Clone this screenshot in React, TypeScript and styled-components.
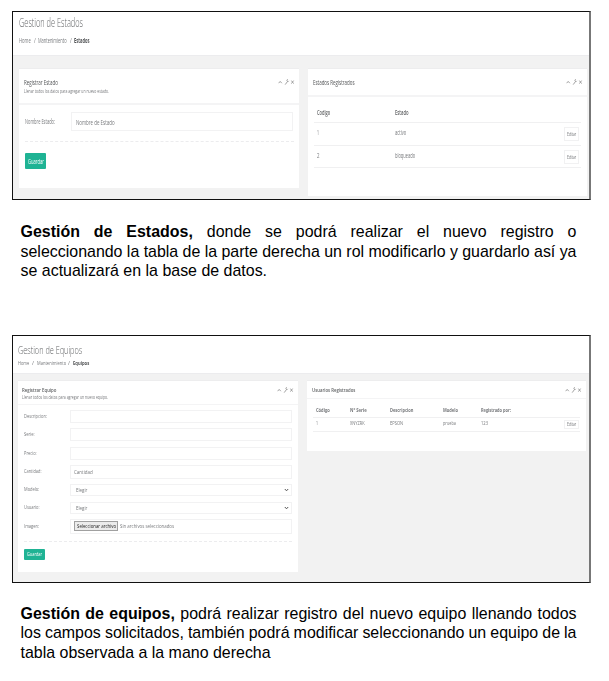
import React, { useLayoutEffect, useRef, useState } from "react";
import styled, { createGlobalStyle } from "styled-components";

const GlobalStyle = createGlobalStyle`
  *, *::before, *::after { box-sizing: border-box; }
  body { margin: 0; background: #fff; }
`;

/* ---------- text condensed to a given width ---------- */

type TextProps = {
  $w: number;
  $size: number;
  $line?: number;
  $weight?: number;
  $color?: string;
};

const TextBox = styled.span<TextProps>`
  display: block;
  flex: none;
  width: ${(p) => p.$w}px;
  height: ${(p) => p.$line ?? 8}px;
  line-height: ${(p) => p.$line ?? 8}px;
  font-family: "Open Sans", "Noto Sans", sans-serif;
  font-size: ${(p) => p.$size}px;
  font-weight: ${(p) => p.$weight ?? 400};
  color: ${(p) => p.$color ?? "#77797c"};
  white-space: nowrap;
`;

const TextInner = styled.span`
  display: inline-block;
  transform-origin: 0 50%;
`;

function Text({ children, ...rest }: TextProps & { children: string }) {
  const ref = useRef<HTMLSpanElement>(null);
  const [scale, setScale] = useState(1);
  useLayoutEffect(() => {
    if (ref.current) setScale(rest.$w / ref.current.offsetWidth);
  }, [rest.$w, children]);
  return (
    <TextBox {...rest}>
      <TextInner ref={ref} style={{ transform: `scaleX(${scale})` }}>
        {children}
      </TextInner>
    </TextBox>
  );
}

/* ---------- page ---------- */

const Page = styled.main`
  width: 609px;
  height: 681px;
  padding: 11px 0 0 12px;
  overflow: hidden;
  background: #fff;
`;

const Frame = styled.section<{ $h: number }>`
  width: 579px;
  height: ${(p) => p.$h}px;
  border: 1px solid #111;
  border-right: 2px solid #777;
  background: #f2f2f2;
  overflow: hidden;
`;

const Heading = styled.header<{ $h: number; $pad: string; $gap: number }>`
  display: flex;
  flex-direction: column;
  gap: ${(p) => p.$gap}px;
  height: ${(p) => p.$h}px;
  padding: ${(p) => p.$pad};
  background: #fff;
  border-bottom: 1px solid #ececee;
  > * { filter: blur(0.3px); }
`;

const Crumbs = styled.nav<{ $gap: number }>`
  display: flex;
  gap: ${(p) => p.$gap}px;
`;

const Columns = styled.div<{ $pad: string }>`
  display: grid;
  grid-template-columns: 280px 279px;
  column-gap: 9px;
  align-items: start;
  padding: ${(p) => p.$pad};
`;

const Card = styled.article<{ $h: number }>`
  height: ${(p) => p.$h}px;
  background: #fff;
  border-top: 1px solid #ededee;
  > * { filter: blur(0.3px); }
`;

const CardHead = styled.div<{ $h: number; $pad: string; $line?: number }>`
  display: flex;
  justify-content: space-between;
  height: ${(p) => p.$h}px;
  padding: ${(p) => p.$pad};
  border-bottom: ${(p) => p.$line ?? 1}px solid #f4f4f5;
`;

const Tools = styled.span`
  display: flex;
  align-items: center;
  height: 8px;
  color: #969696;
`;

const Form = styled.form<{ $pad: string }>`
  display: flex;
  flex-direction: column;
  padding: ${(p) => p.$pad};
`;

const Field = styled.div<{ $h: number; $mb: number; $label: number }>`
  display: grid;
  grid-template-columns: ${(p) => p.$label}px 222px;
  align-items: center;
  height: ${(p) => p.$h}px;
  margin-bottom: ${(p) => p.$mb}px;
`;

const FieldLabel = styled.label`
  padding-bottom: 1px;
`;

const Control = styled.div<{ $pl?: number }>`
  display: flex;
  align-items: center;
  height: 100%;
  padding: 0 2px 0 ${(p) => p.$pl ?? 4}px;
  border: 1px solid #f2f2f3;
  > svg { margin-left: auto; }
`;

const FileButton = styled.span`
  display: flex;
  align-items: center;
  justify-content: center;
  width: 44px;
  height: 10px;
  margin-right: 1.5px;
  border: 1px solid #a0a0a0;
  background: #ececec;
`;

const Dashes = styled.div`
  border-top: 1px dashed #ececee;
`;

const Save = styled.button<{ $w: number; $h: number; $mt: number }>`
  display: flex;
  align-items: center;
  justify-content: center;
  width: ${(p) => p.$w}px;
  height: ${(p) => p.$h}px;
  margin: ${(p) => p.$mt}px 0 0;
  padding: 0;
  border: 0;
  border-radius: 1px;
  background: #1fb394;
`;

const Table = styled.div<{ $mt: number }>`
  width: 267px;
  margin: ${(p) => p.$mt}px 0 0 6px;
`;

const Row = styled.div<{ $cols: string; $h: number; $pb?: number }>`
  display: grid;
  grid-template-columns: ${(p) => p.$cols};
  align-items: center;
  height: ${(p) => p.$h}px;
  padding: 0 0 ${(p) => p.$pb ?? 0}px 2.5px;
  border-bottom: 1px solid #f0f0f1;
`;

const Edit = styled.span<{ $h: number }>`
  display: flex;
  align-items: center;
  justify-content: center;
  width: 15px;
  height: ${(p) => p.$h}px;
  margin-top: 2px;
  border: 1px solid #f1f1f2;
`;

const Paragraph = styled.div<{ $mt: number; $mb?: number }>`
  width: 556px;
  margin: ${(p) => p.$mt}px 0 ${(p) => p.$mb ?? 0}px 8.5px;
  font: 15.96px/19.5px "Liberation Sans", Arial, sans-serif;
  color: #000;
`;

const Line = styled.div<{ $last?: boolean }>`
  white-space: nowrap;
  text-align: justify;
  text-align-last: ${(p) => (p.$last ? "left" : "justify")};
  word-spacing: ${(p) => (p.$last ? 0 : -0.5)}px;
`;

/* ---------- icons ---------- */

function CardTools() {
  return (
    <Tools>
      <svg width="17" height="8" viewBox="0 0 17 8" fill="none" stroke="currentColor" strokeWidth="0.9">
        <path d="M0.6 5.2 2.2 3.4 3.8 5.2" />
        <path d="M7.2 6.6 9.6 3.4" strokeWidth="0.9" />
        <path d="M9.9 1.5A1 1 0 1 0 10.8 2.9" />
        <path d="M13.4 2.6 15.6 5.6M15.6 2.6 13.4 5.6" />
      </svg>
    </Tools>
  );
}

function Chevron() {
  return (
    <svg width="5" height="4" viewBox="0 0 5 4" fill="none" stroke="#555" strokeWidth="1">
      <path d="M0.8 1 2.5 2.8 4.2 1" />
    </svg>
  );
}

/* ---------- panels ---------- */

const statusCols = "78.5px 169px 15px";
const deviceCols = "34.5px 40px 53px 37.5px 83.5px 15px";

function StatusPanel() {
  return (
    <Frame $h={189}>
      <Heading $h={44} $pad="2px 0 0 6px" $gap={2}>
        <Text $w={64} $size={13.5} $line={17} $weight={300} $color="#606264">Gestion de Estados</Text>
        <Crumbs $gap={2.7}>
          <Text $w={12} $size={7} $line={15}>Home</Text>
          <Text $w={2} $size={7} $line={15}>/</Text>
          <Text $w={28.5} $size={7} $line={15}>Mantenimiento</Text>
          <Text $w={2} $size={7} $line={15}>/</Text>
          <Text $w={15.5} $size={7} $line={15} $weight={700} $color="#505254">Estados</Text>
        </Crumbs>
      </Heading>
      <Columns $pad="12px 0 0 6px">
        <Card $h={120}>
          <CardHead $h={36} $pad="9px 4px 0 5px" $line={2}>
            <div>
              <Text $w={34} $size={7.6} $line={9} $weight={500} $color="#505254">Registrar Estado</Text>
              <Text $w={85} $size={5.8} $line={9}>Llenar todos los datos para agregar un nuevo estado.</Text>
            </div>
            <CardTools />
          </CardHead>
          <Form $pad="7px 5px 0 6px">
            <Field $h={19} $mb={10} $label={46}>
              <FieldLabel><Text $w={30} $size={7.3}>Nombre Estado:</Text></FieldLabel>
              <Control><Text $w={38.5} $size={7.6}>Nombre de Estado</Text></Control>
            </Field>
            <Dashes />
            <Save type="button" $w={21} $h={16} $mt={11}>
              <Text $w={16} $size={7.2} $color="#fff">Guardar</Text>
            </Save>
          </Form>
        </Card>
        <Card $h={128}>
          <CardHead $h={28} $pad="9px 4px 0 4.5px" $line={2}>
            <Text $w={41.5} $size={7.6} $line={9} $weight={500} $color="#505254">Estados Registrados</Text>
            <CardTools />
          </CardHead>
          <Table $mt={7}>
            <Row $cols={statusCols} $h={19}>
              <Text $w={13.5} $size={6.8} $weight={600} $color="#606264">Codigo</Text>
              <Text $w={13.5} $size={6.8} $weight={600} $color="#606264">Estado</Text>
            </Row>
            <Row $cols={statusCols} $h={23} $pb={2}>
              <Text $w={2} $size={7}>1</Text>
              <Text $w={11} $size={7}>activo</Text>
              <Edit $h={14}><Text $w={9} $size={6}>Editar</Text></Edit>
            </Row>
            <Row $cols={statusCols} $h={22} $pb={2}>
              <Text $w={2.5} $size={7}>2</Text>
              <Text $w={20} $size={7}>bloqueado</Text>
              <Edit $h={14}><Text $w={9} $size={6}>Editar</Text></Edit>
            </Row>
          </Table>
        </Card>
      </Columns>
    </Frame>
  );
}

type FieldSpec = { label: string; w: number; h: number; mb: number; text?: string; tw?: number; select?: boolean };

const fields: FieldSpec[] = [
  { label: "Descripcion:", w: 23, h: 13, mb: 5 },
  { label: "Serie:", w: 10.5, h: 13, mb: 6 },
  { label: "Precio:", w: 12.5, h: 13, mb: 5 },
  { label: "Cantidad:", w: 17.5, h: 14, mb: 5, text: "Cantidad", tw: 18.5 },
  { label: "Modelo:", w: 15, h: 12, mb: 6, text: "Elegir", tw: 11, select: true },
  { label: "Usuario:", w: 15.5, h: 12, mb: 5, text: "Elegir", tw: 11, select: true },
];

function DevicePanel() {
  return (
    <Frame $h={248}>
      <Heading $h={38} $pad="7px 0 0 5px" $gap={2}>
        <Text $w={64.5} $size={10} $line={14} $weight={300} $color="#606264">Gestion de Equipos</Text>
        <Crumbs $gap={2.5}>
          <Text $w={11.5} $size={5.2}>Home</Text>
          <Text $w={2} $size={5.2}>/</Text>
          <Text $w={29} $size={5.2}>Mantenimiento</Text>
          <Text $w={2} $size={5.2}>/</Text>
          <Text $w={16} $size={5.2} $weight={700} $color="#505254">Equipos</Text>
        </Crumbs>
      </Heading>
      <Columns $pad="6px 0 0 5px">
        <Card $h={192}>
          <CardHead $h={24} $pad="5px 4px 0 4px">
            <div>
              <Text $w={34.5} $size={5.4} $line={8} $weight={600} $color="#606264">Registrar Equipo</Text>
              <Text $w={86} $size={4.5} $line={6}>Llenar todos los datos para agregar un nuevo equipo.</Text>
            </div>
            <CardTools />
          </CardHead>
          <Form $pad="5px 6px 0 6px">
            {fields.map((f) => (
              <Field key={f.label} $h={f.h} $mb={f.mb} $label={46}>
                <FieldLabel><Text $w={f.w} $size={5.4}>{f.label}</Text></FieldLabel>
                <Control $pl={f.select ? 4.5 : 3}>
                  {f.text && <Text $w={f.tw!} $size={5.6}>{f.text}</Text>}
                  {f.select && <Chevron />}
                </Control>
              </Field>
            ))}
            <Field $h={15} $mb={7} $label={46}>
              <FieldLabel><Text $w={15} $size={5.4}>Imagen:</Text></FieldLabel>
              <Control $pl={3}>
                <FileButton><Text $w={39} $size={5.7} $color="#222">Seleccionar archivo</Text></FileButton>
                <Text $w={54} $size={5.6}>Sin archivos seleccionados</Text>
              </Control>
            </Field>
            <Dashes />
            <Save type="button" $w={21} $h={11} $mt={7}>
              <Text $w={15} $size={5.2} $color="#fff">Guardar</Text>
            </Save>
          </Form>
        </Card>
        <Card $h={71}>
          <CardHead $h={18} $pad="5px 4px 0 4.5px">
            <Text $w={43.5} $size={5.3} $weight={600} $color="#606264">Usuarios Registrados</Text>
            <CardTools />
          </CardHead>
          <Table $mt={6}>
            <Row $cols={deviceCols} $h={13} $pb={1}>
              <Text $w={13.5} $size={5.1} $weight={700}>Código</Text>
              <Text $w={16.5} $size={5.1} $weight={700}>N° Serie</Text>
              <Text $w={23.5} $size={5.1} $weight={700}>Descripcion</Text>
              <Text $w={15} $size={5.1} $weight={700}>Modelo</Text>
              <Text $w={30} $size={5.1} $weight={700}>Registrado por:</Text>
            </Row>
            <Row $cols={deviceCols} $h={14} $pb={2}>
              <Text $w={2} $size={5.3}>1</Text>
              <Text $w={15} $size={5.3}>XNYZRK</Text>
              <Text $w={13} $size={5.3}>EPSON</Text>
              <Text $w={13} $size={5.3}>prueba</Text>
              <Text $w={7} $size={5.3}>123</Text>
              <Edit $h={9}><Text $w={9} $size={4.5}>Editar</Text></Edit>
            </Row>
          </Table>
        </Card>
      </Columns>
    </Frame>
  );
}

export default function App() {
  return (
    <>
      <GlobalStyle />
      <Page>
        <StatusPanel />
        <Paragraph $mt={22} $mb={54}>
          <Line><b>Gestión de Estados,</b> donde se podrá realizar el nuevo registro o</Line>
          <Line>seleccionando la tabla de la parte derecha un rol modificarlo y guardarlo así ya</Line>
          <Line $last>se actualizará en la base de datos.</Line>
        </Paragraph>
        <DevicePanel />
        <Paragraph $mt={21}>
          <Line><b>Gestión de equipos,</b> podrá realizar registro del nuevo equipo llenando todos</Line>
          <Line>los campos solicitados, también podrá modificar seleccionando un equipo de la</Line>
          <Line $last>tabla observada a la mano derecha</Line>
        </Paragraph>
      </Page>
    </>
  );
}
